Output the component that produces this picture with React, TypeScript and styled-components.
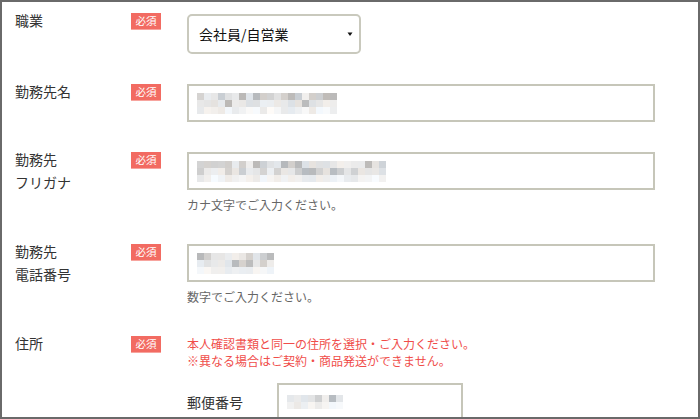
import React from 'react';
import styled, { createGlobalStyle } from 'styled-components';

const GlobalStyle = createGlobalStyle`
    html, body {
        margin: 0;
        padding: 0;
        background: #ffffff;
    }
    * {
        box-sizing: border-box;
    }
`;

const Frame = styled.div`
    width: 700px;
    height: 419px;
    border: 2px solid #6a6a6a;
    background: #fff;
    overflow: hidden;
    padding: 11px 0 0 13px;
    font-family: "Noto Sans CJK JP", "Noto Sans", sans-serif;
    color: #333;
`;

const FormRow = styled.div`
    display: grid;
    grid-template-columns: 116px 56px 468px;
    align-items: start;
    margin-bottom: 30px;
`;

const Label = styled.div`
    font-size: 14px;
    line-height: 23px;
    margin-top: -4px;
    color: #333;
`;

const Badge = styled.span`
    display: block;
    width: 30px;
    height: 17px;
    background: #f26b62;
    color: #fff;
    font-size: 10.5px;
    line-height: 16px;
    text-align: center;
    margin-top: 0;
    border-bottom: 1px solid #f7a49e;
`;

const Field = styled.div`
    display: flex;
    flex-direction: column;
`;

const SelectBox = styled.div`
    width: 174px;
    height: 40px;
    margin-top: 1px;
    border: 2px solid #c9c9bd;
    border-radius: 5px;
    display: flex;
    align-items: center;
    justify-content: space-between;
    padding: 0 5px 0 10px;
    font-size: 14px;
    color: #111;
`;

const TextBox = styled.div<{ $width?: number }>`
    width: ${p => (p.$width ? `${p.$width}px` : '100%')};
    height: 38px;
    border: 2px solid #c6c6b9;
    display: flex;
    align-items: center;
    padding-left: 8px;
`;

const Hint = styled.div`
    font-size: 12px;
    line-height: 18px;
    margin-top: 6px;
    color: #666;
`;

const Notice = styled.div`
    font-size: 12px;
    line-height: 17px;
    color: #f04d4a;
    margin-top: -1px;
`;

const SubRow = styled.div`
    display: grid;
    grid-template-columns: 90px 186px;
    align-items: center;
    margin-top: 14px;
`;

const SubLabel = styled.div`
    font-size: 14px;
    color: #333;
`;

function seeded(n: number) {
    const x = Math.sin(n * 12.9898 + 78.233) * 43758.5453;
    return x - Math.floor(x);
}

const Mosaic: React.FC<{ cols: number; rows: number; seed: number }> = ({ cols, rows, seed }) => {
    const cell = 7;
    const rects = [];
    for (let r = 0; r < rows; r++) {
        for (let c = 0; c < cols; c++) {
            const v = seeded(seed * 97 + r * 31 + c);
            let g: number;
            if (r === rows - 1) g = 232 + Math.floor(v * 20);
            else if (v > 0.85) g = 150 + Math.floor(v * 40);
            else if (v > 0.55) g = 195 + Math.floor(v * 20);
            else g = 224 + Math.floor(v * 28);
            const tint = Math.floor(seeded(seed + r * 7 + c * 3) * 10) - 5;
            rects.push(
                <rect
                    key={`${r}-${c}`}
                    x={c * cell}
                    y={r * cell}
                    width={cell}
                    height={cell}
                    fill={`rgb(${g + tint},${g},${g - tint})`}
                />
            );
        }
    }
    return (
        <svg width={cols * cell} height={rows * cell} style={{ display: 'block' }}>
            {rects}
        </svg>
    );
};

const Arrow = () => (
    <svg width="8" height="6" viewBox="0 0 8 6">
        <path d="M1.5 1.5 H6.5 L4 5 Z" fill="#111" />
    </svg>
);

const App: React.FC = () => {
    return (
        <>
            <GlobalStyle />
            <Frame>
                <FormRow>
                    <Label>職業</Label>
                    <div><Badge>必須</Badge></div>
                    <Field>
                        <SelectBox>
                            <span>会社員/自営業</span>
                            <Arrow />
                        </SelectBox>
                    </Field>
                </FormRow>

                <FormRow>
                    <Label>勤務先名</Label>
                    <div><Badge>必須</Badge></div>
                    <Field>
                        <TextBox>
                            <Mosaic cols={20} rows={3} seed={1} />
                        </TextBox>
                    </Field>
                </FormRow>

                <FormRow>
                    <Label>勤務先<br />フリガナ</Label>
                    <div><Badge>必須</Badge></div>
                    <Field>
                        <TextBox>
                            <Mosaic cols={27} rows={3} seed={2} />
                        </TextBox>
                        <Hint>カナ文字でご入力ください。</Hint>
                    </Field>
                </FormRow>

                <FormRow>
                    <Label>勤務先<br />電話番号</Label>
                    <div><Badge>必須</Badge></div>
                    <Field>
                        <TextBox>
                            <Mosaic cols={11} rows={3} seed={3} />
                        </TextBox>
                        <Hint>数字でご入力ください。</Hint>
                    </Field>
                </FormRow>

                <FormRow>
                    <Label>住所</Label>
                    <div><Badge>必須</Badge></div>
                    <Field>
                        <Notice>
                            本人確認書類と同一の住所を選択・ご入力ください。<br />
                            ※異なる場合はご契約・商品発送ができません。
                        </Notice>
                        <SubRow>
                            <SubLabel>郵便番号</SubLabel>
                            <TextBox $width={186}>
                                <Mosaic cols={8} rows={2} seed={4} />
                            </TextBox>
                        </SubRow>
                    </Field>
                </FormRow>
            </Frame>
        </>
    );
};

export default App;
